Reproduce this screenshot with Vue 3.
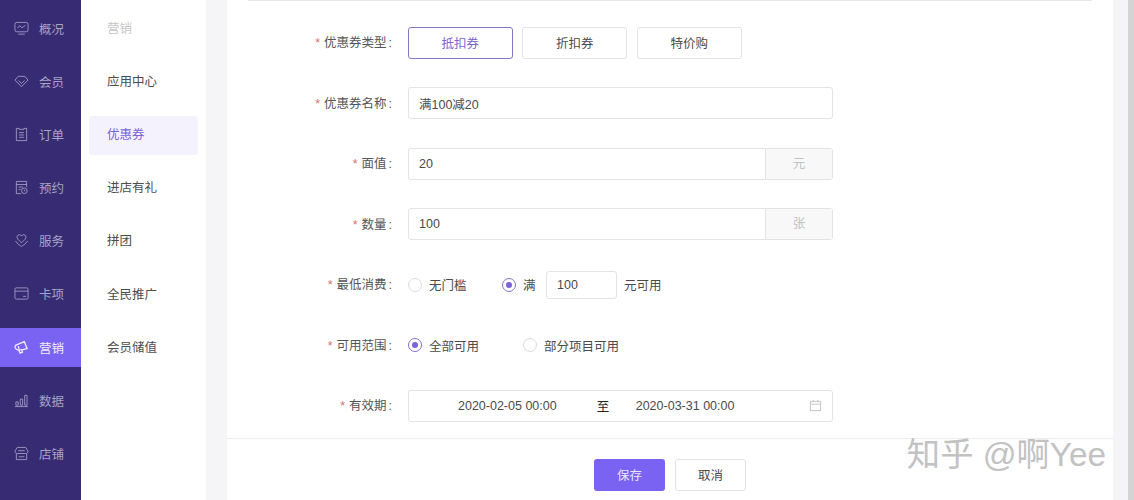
<script setup>
import { ref } from 'vue'

const railItems = [
  { name: '概况', icon: 'overview' },
  { name: '会员', icon: 'member' },
  { name: '订单', icon: 'order' },
  { name: '预约', icon: 'booking' },
  { name: '服务', icon: 'service' },
  { name: '卡项', icon: 'card' },
  { name: '营销', icon: 'market' },
  { name: '数据', icon: 'chart' },
  { name: '店铺', icon: 'shop' },
]

const subItems = ['应用中心', '优惠券', '进店有礼', '拼团', '全民推广', '会员储值']

const couponTypes = ['抵扣券', '折扣券', '特价购']
const couponType = ref('抵扣券')
const couponName = ref('满100减20')
const faceValue = ref('20')
const amount = ref('100')
const minSpend = ref('100')
</script>

<template>
  <div class="page">
    <aside class="rail">
      <div
          v-for="item in railItems"
          :key="item.name"
          class="rail__item"
          :class="{ rail__item_active: item.name === '营销' }"
      >
        <svg class="rail__icon" viewBox="0 0 16 16" fill="none" stroke="currentColor" stroke-width="0.9">
          <template v-if="item.icon === 'overview'">
            <rect x="1" y="1.500" width="14" height="10" rx="2"/>
            <path d="M3.800 7.500L6 5l2.500 2.200L12 4.800M4.500 14h7"/>
          </template>
          <path v-else-if="item.icon === 'member'" d="M4.500 2.500h7L15 6.500 8 13.500 1 6.500zM4.800 7l3.200 3.200L11.200 7"/>
          <template v-else-if="item.icon === 'order'">
            <path d="M2.500 1.500h3v1h5v-1h3v13h-11z"/>
            <path d="M5.500 6h5M5.500 8.500h5M5.500 11h5"/>
          </template>
          <template v-else-if="item.icon === 'booking'">
            <path d="M13.500 7.500V1.500H2.500v13H7.500M2.500 4.800h11M5 7.500h4.500M5 10h2"/>
            <circle cx="11" cy="11.500" r="3"/>
            <path d="M11 10.300v1.200h1"/>
          </template>
          <template v-else-if="item.icon === 'service'">
            <path d="M8 10.500L4 6.500C2.500 4.500 3.500 1.800 5.800 1.800c1 0 1.700.5 2.200 1.300.5-.8 1.200-1.300 2.200-1.300 2.300 0 3.300 2.700 1.800 4.700z"/>
            <path d="M1.500 8.500L4.500 12c1 1 2.500 1 3.500 2.500C9 13 10.500 13 11.500 12l3-3.500"/>
          </template>
          <template v-else-if="item.icon === 'card'">
            <rect x="1" y="2" width="14" height="12" rx="1.500"/>
            <path d="M1 5.500h14M9.500 11h3.500"/>
          </template>
          <template v-else-if="item.icon === 'market'">
            <path d="M1.500 5.800L11 1.800l3 7.400-4.500 1L4 10.500c-2 0-3.500-2.800-2.500-4.700z" stroke-width="1.400"/>
            <path d="M4.500 6.500l1 3" stroke-width="1.400"/>
            <path d="M5 10.500l1.500 3.500 2.500-1-1-3" stroke-width="1.400"/>
          </template>
          <path v-else-if="item.icon === 'chart'" d="M1 14.500h14M2 9.500h2.500v3.500H2zM6.700 6.500h2.500V13H6.700zM11.400 2.500h2.500V13h-2.500z"/>
          <template v-else>
            <path d="M3.500 1.500h9l2.500 4c0 1.800-1.500 2.500-2.500 2.500h-9C2.500 8 1 7.300 1 5.500z"/>
            <path d="M2.500 8v6.500h11V8M4.500 5h7M5 11.500h6"/>
          </template>
        </svg>
        <span>{{ item.name }}</span>
      </div>
    </aside>

    <nav class="sub">
      <div class="sub__row sub__row_title">
        <div class="sub__item">营销</div>
      </div>
      <div
          v-for="item in subItems"
          :key="item"
          class="sub__row"
      >
        <div class="sub__item" :class="{ sub__item_active: item === '优惠券' }">{{ item }}</div>
      </div>
    </nav>

    <main class="card">
      <div class="card__line"/>
      <form class="form" @submit.prevent>
        <div class="form__row">
          <label class="form__label">优惠券类型</label>
          <div class="types">
            <button
                v-for="type in couponTypes"
                :key="type"
                type="button"
                class="types__btn"
                :class="{ types__btn_active: type === couponType }"
                @click="couponType = type"
            >{{ type }}</button>
          </div>
        </div>

        <div class="form__row">
          <label class="form__label">优惠券名称</label>
          <div class="field"><input v-model="couponName" class="field__input"/></div>
        </div>

        <div class="form__row">
          <label class="form__label">面值</label>
          <div class="field">
            <input v-model="faceValue" class="field__input"/>
            <span class="field__addon">元</span>
          </div>
        </div>

        <div class="form__row">
          <label class="form__label">数量</label>
          <div class="field">
            <input v-model="amount" class="field__input"/>
            <span class="field__addon">张</span>
          </div>
        </div>

        <div class="form__row">
          <label class="form__label">最低消费</label>
          <div class="options">
            <span class="radio"/>
            <span class="options__text options__text_wide">无门槛</span>
            <span class="radio radio_on"/>
            <span class="options__text">满</span>
            <input v-model="minSpend" class="mini-input"/>
            <span class="options__unit">元可用</span>
          </div>
        </div>

        <div class="form__row">
          <label class="form__label">可用范围</label>
          <div class="options">
            <span class="radio radio_on"/>
            <span class="options__text options__text_wider">全部可用</span>
            <span class="radio"/>
            <span class="options__text">部分项目可用</span>
          </div>
        </div>

        <div class="form__row">
          <label class="form__label">有效期</label>
          <div class="dates">
            <span>2020-02-05 00:00</span>
            <span class="dates__to">至</span>
            <span>2020-03-31 00:00</span>
            <svg class="dates__icon" viewBox="0 0 14 14" fill="none" stroke="#c4c4c8" stroke-width="1">
              <rect x="1.500" y="2.500" width="11" height="10"/>
              <path d="M1.500 5.500h11M4.500 1v2.500M9.500 1v2.500"/>
            </svg>
          </div>
        </div>
      </form>

      <footer class="actions">
        <button type="button" class="actions__save">保存</button>
        <button type="button" class="actions__cancel">取消</button>
      </footer>

      <div class="watermark">知乎 @啊Yee</div>
    </main>

    <div class="scrollbar"/>
  </div>
</template>

<style>
html, body {
  margin: 0;
  height: 100%;
  overflow: hidden;
}
</style>

<style scoped>
.page {
  display: flex;
  width: 1134px;
  height: 500px;
  overflow: hidden;
  background-color: #f5f5f7;
  font-family: "Liberation Sans", "Noto Sans CJK SC", sans-serif;
  font-size: 12.500px;
  color: #4d4d4d;
}

.rail {
  flex: 0 0 81px;
  padding-top: 9px;
  box-sizing: border-box;
  background-color: #372b73;
  color: #a8a3c8;
}

.rail__item {
  display: flex;
  align-items: center;
  height: 39px;
  margin-bottom: 14.100px;
  padding-left: 14px;
  gap: 10px;
}

.rail__item_active {
  background-color: #7a62f2;
  color: #f1eefd;
}

.rail__icon {
  width: 15px;
  height: 15px;
  flex-shrink: 0;
}

.sub {
  flex: 0 0 125px;
  background-color: #fff;
  padding-top: 3px;
  box-sizing: border-box;
}

.sub__row {
  height: 53.100px;
  display: flex;
  align-items: center;
  padding: 0 8px;
}

.sub__row_title {
  color: #c6c6c6;
}

.sub__item {
  flex: 1;
  height: 39px;
  line-height: 39px;
  padding-left: 18px;
  border-radius: 3px;
}

.sub__item_active {
  background-color: #f4f2fd;
  color: #7a62d8;
}

.card {
  flex: 0 0 886px;
  margin-left: 21px;
  position: relative;
  display: flex;
  flex-direction: column;
  background-color: #fff;
}

.card__line {
  height: 1px;
  margin: 0 21px;
  background-color: #e8e8e8;
}

.form {
  flex: 1;
  padding-top: 11.500px;
}

.form__row {
  display: flex;
  align-items: center;
  height: 60.500px;
}

.form__label {
  width: 165px;
  margin-right: 16px;
  padding-bottom: 2px;
  text-align: right;
  color: #555;
}

.form__label::before {
  content: "*";
  margin-right: 4px;
  color: #d9706e;
}

.form__label::after {
  content: ":";
  margin-left: 2px;
}

.types {
  display: flex;
  gap: 9.800px;
}

.types__btn {
  width: 104.700px;
  height: 32px;
  padding: 0;
  border: 1px solid #e3e3e3;
  border-radius: 3px;
  background-color: #fff;
  font: inherit;
  color: #4a4a4a;
  cursor: pointer;
}

.types__btn_active {
  border-color: #8376c6;
  color: #7a62d8;
}

.field {
  display: flex;
  width: 425px;
  height: 32px;
  box-sizing: border-box;
  border: 1px solid #e3e3e3;
  border-radius: 3px;
}

.field__input {
  flex: 1;
  min-width: 0;
  padding: 0 10px;
  border: none;
  outline: none;
  background: none;
  font: inherit;
  color: #4a4a4a;
}

.field__addon {
  flex: 0 0 66px;
  line-height: 30px;
  text-align: center;
  border-left: 1px solid #e3e3e3;
  background-color: #f8f8f8;
  color: #c0c0c0;
}

.options {
  display: flex;
  align-items: center;
}

.options__text {
  margin-left: 7px;
  color: #4a4a4a;
}

.options__text_wide {
  margin-right: 35.500px;
}

.options__text_wider {
  margin-right: 44px;
}

.options__unit {
  margin-left: 7px;
  color: #4a4a4a;
}

.radio {
  width: 12px;
  height: 12px;
  border: 1px solid #dcdcdc;
  border-radius: 50%;
  background-color: #fff;
  position: relative;
}

.radio_on {
  border-color: #8376c6;
}

.radio_on::after {
  content: "";
  position: absolute;
  inset: 3px;
  border-radius: 50%;
  background-color: #7a62d8;
}

.mini-input {
  width: 71px;
  height: 28px;
  margin-left: 10.500px;
  padding: 0 10px;
  box-sizing: border-box;
  border: 1px solid #e3e3e3;
  border-radius: 3px;
  outline: none;
  font: inherit;
  color: #4a4a4a;
}

.dates {
  display: flex;
  align-items: center;
  width: 425px;
  height: 32px;
  box-sizing: border-box;
  padding-left: 49px;
  border: 1px solid #e3e3e3;
  border-radius: 3px;
  color: #4a4a4a;
}

.dates__to {
  margin: 0 26.500px 0 40px;
  color: #222;
}

.dates__icon {
  width: 13px;
  height: 13px;
  margin-left: auto;
  margin-right: 10px;
}

.actions {
  display: flex;
  justify-content: center;
  gap: 10px;
  height: 62px;
  padding-top: 19.500px;
  box-sizing: border-box;
  border-top: 1px solid #ececec;
}

.actions__save,
.actions__cancel {
  width: 71px;
  height: 32px;
  padding: 0;
  border-radius: 3px;
  font: inherit;
  cursor: pointer;
}

.actions__save {
  border: none;
  background-color: #7a62f2;
  color: #e9e5fc;
}

.actions__cancel {
  border: 1px solid #e3e3e3;
  background-color: #fff;
  color: #4a4a4a;
}

.watermark {
  position: absolute;
  right: 7px;
  bottom: 26px;
  font-size: 33.300px;
  line-height: 38px;
  white-space: nowrap;
  color: #c2c2c2;
  text-shadow: 1px 1px 0 rgba(255, 255, 255, 0.8);
}

.scrollbar {
  flex: 0 0 6px;
  margin-left: 15px;
  background-color: #d4d4d4;
}
</style>
